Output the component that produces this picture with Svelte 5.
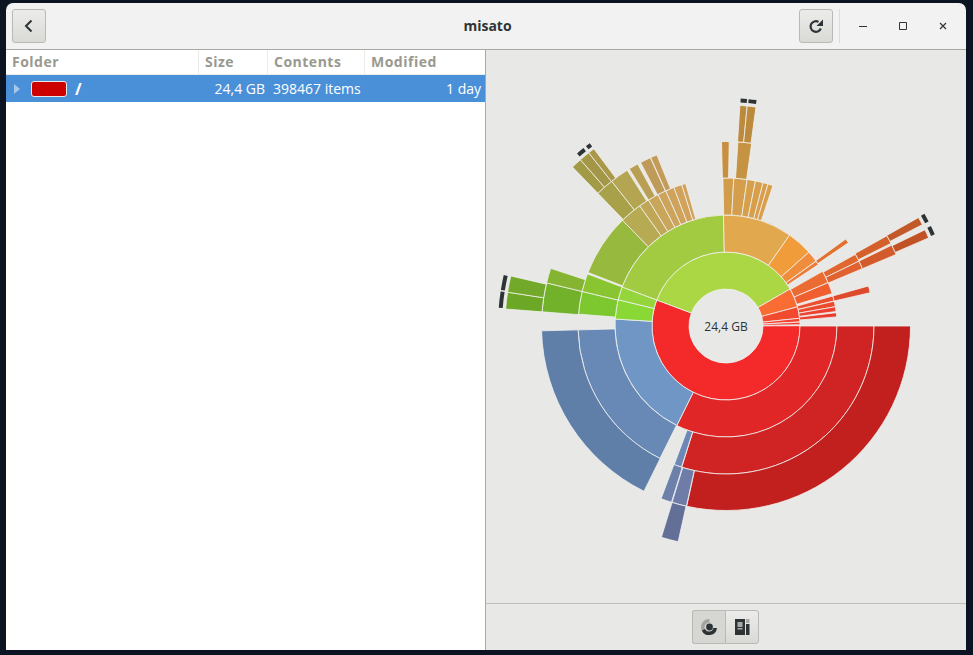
<script>
  const cx = 240, cy = 276;
  const R = [37, 74, 111, 148, 184.5, 221, 224, 228];
  // ring, start angle, end angle (degrees clockwise from east), colour
  const slices = [
    [0, -0.2, 200.6, '#f42a2a'], [0, -159.4, -30, '#aad743'], [0, -30, -15, '#f96d35'], [0, -15, -6, '#f24a2e'],
    [0, -6, -3.2, '#f3402c'], [0, -3, -1, '#f3362b'],
    [1, 0, 116.3, '#e02626'], [1, 116.3, 183.6, '#7096c6'], [1, -176.4, -166.3, '#89d835'], [1, -166.3, -159.4, '#94d53c'],
    [1, -159.4, -91.3, '#a3cb42'], [1, -91.3, -55, '#e2a84e'], [1, -55, -41.7, '#f09c3a'], [1, -41.7, -35.8, '#ef8d3c'],
    [1, -35.7, -33.6, '#ec7c36'], [1, -29.5, -23, '#ea6c33'], [1, -23, -17, '#ef5f30'], [1, -15.7, -13, '#ec4f2e'],
    [1, -12.9, -10, '#ec4a2e'], [1, -10, -7.5, '#ec4230'], [1, -6.9, -4.7, '#ea3a2c'],
    [2, 0, 107.4, '#d02323'], [2, 107.5, 110.5, '#6e88b6'], [2, 116.5, 178.5, '#6889b5'], [2, -175.4, -166.5, '#7dc72f'],
    [2, -166.5, -159.4, '#89c431'], [2, -158.8, -134.4, '#97ba3e'], [2, -134.4, -125.7, '#b6ab53'],
    [2, -125.7, -121.6, '#c0a657'], [2, -121.6, -117.4, '#c8a65a'], [2, -117.4, -114, '#cca45b'], [2, -114, -110.6, '#cfa35b'],
    [2, -110.6, -107.4, '#d1a25a'], [2, -107.4, -105.8, '#d3a25a'],
    [2, -91.2, -87, '#d19d4b'], [2, -87, -81.8, '#d49e4c'], [2, -81.8, -78.5, '#d69f4c'], [2, -78.5, -75.5, '#d79f4c'],
    [2, -75.5, -73.5, '#d89e4b'], [2, -73.5, -71.5, '#da9d4a'], [2, -36, -34.2, '#e2702f'], [2, -29, -26, '#e0682f'],
    [2, -26, -22.8, '#e26130'], [2, -15.7, -13, '#dd4a2c'],
    [3, 0, 102.3, '#c21f1f'], [3, 102.4, 107, '#6f7ca8'], [3, 107.2, 110.6, '#6c80aa'], [3, 116.4, 178.5, '#5f7fa9'],
    [3, -175.6, -166.5, '#72b22b'], [3, -166.5, -161.8, '#85b433'], [3, -134, -128.3, '#a9a14a'], [3, -128.3, -122.4, '#b4a552'],
    [3, -121.6, -118.6, '#b89f53'], [3, -117.6, -114.2, '#c09a58'], [3, -114.1, -112, '#c49c5a'],
    [3, -91.4, -89, '#c98f41'], [3, -86.3, -82, '#c59342'], [3, -29.3, -26.6, '#d4602c'], [3, -26, -22.8, '#d35a2b'],
    [4, -175.6, -171.2, '#6ca726'], [4, -171.2, -166.9, '#72a92b'], [4, -134, -131.2, '#a39a45'], [4, -131.2, -128.4, '#a39646'],
    [4, -128.4, -126.7, '#a9974a'], [4, 102.5, 107, '#626f97'], [4, -86.4, -84.5, '#bb8a3c'], [4, -84.5, -82.2, '#bb8a3c'],
    [4, -29.4, -27.3, '#c15928'], [4, -25.8, -23.5, '#c15225']
  ];
  const ticks = [[-175.4, -171.3], [-170.9, -167.1], [-130.8, -128.7], [-127.9, -126.7], [-86.3, -84.7], [-84.3, -82.3], [-29.5, -27.3], [-26, -23.7]];

  function pt(r, a) {
    const t = (a * Math.PI) / 180;
    return `${(cx + r * Math.cos(t)).toFixed(2)} ${(cy + r * Math.sin(t)).toFixed(2)}`;
  }
  function arc(r0, r1, a0, a1) {
    const big = a1 - a0 > 180 ? 1 : 0;
    return `M${pt(r0, a0)}A${r0} ${r0} 0 ${big} 1 ${pt(r0, a1)}L${pt(r1, a1)}A${r1} ${r1} 0 ${big} 0 ${pt(r1, a0)}Z`;
  }
</script>

<div class="window">
  <header class="titlebar">
    <div class="side">
      <button class="btn" aria-label="Back">
        <svg width="16" height="16" viewBox="0 0 16 16"><path d="M10.500 2.500 5 8l5.500 5.500" fill="none" stroke="#2e3436" stroke-width="2"/></svg>
      </button>
    </div>
    <div class="title">misato</div>
    <div class="side end">
      <button class="btn" aria-label="Reload">
        <svg width="16" height="16" viewBox="0 0 16 16"><path d="M12.800 10.500A5.300 5.300 0 1 1 10.500 3.900" fill="none" stroke="#2e3436" stroke-width="2.200"/><path d="M15 1.500v6.500H8.500z" fill="#2e3436"/></svg>
      </button>
      <div class="sep"></div>
      <div class="wctl" aria-label="Minimize"><svg width="10" height="10" viewBox="0 0 10 10"><path d="M1 5.500h8" stroke="#2e3436" stroke-width="1"/></svg></div>
      <div class="wctl" aria-label="Maximize"><svg width="10" height="10" viewBox="0 0 10 10"><path d="M1.500 1.500h7v7h-7z" fill="none" stroke="#2e3436" stroke-width="1"/></svg></div>
      <div class="wctl" aria-label="Close"><svg width="10" height="10" viewBox="0 0 10 10"><path d="m2 2 6 6M8 2 2 8" stroke="#2e3436" stroke-width="1.200"/></svg></div>
    </div>
  </header>

  <main class="body">
    <section class="list">
      <div class="cols head">
        <div>Folder</div><div>Size</div><div>Contents</div><div>Modified</div>
      </div>
      <div class="cols row">
        <div class="name">
          <svg class="arrow" width="8" height="10" viewBox="0 0 8 10"><path d="M1 0 7 5 1 10z" fill="#a6c6ea"/></svg>
          <span class="chip"></span>
          <b>/</b>
        </div>
        <div class="right size">24,4 GB</div>
        <div class="items">398467 items</div>
        <div class="right">1 day</div>
      </div>
    </section>

    <section class="chart">
      <div class="canvas">
        <svg width="480" height="553" viewBox="0 0 480 553">
          {#each slices as s}
            <path d={arc(R[s[0]], R[s[0] + 1], s[1], s[2])} fill={s[3]} stroke="#f1f1ef" stroke-width="0.800"/>
          {/each}
          {#each ticks as t}
            <path d={arc(R[6], R[7], t[0], t[1])} fill="#2e3436"/>
          {/each}
          <text x={cx} y={cy + 5} text-anchor="middle" class="center">24,4 GB</text>
        </svg>
      </div>
      <footer class="bottom">
        <div class="group">
          <button class="seg on" aria-label="Rings chart">
            <svg width="18" height="18" viewBox="0 0 18 18">
              <path d="M1.800 12.400A8 8 0 0 1 9.500 1V4.700A4.400 4.400 0 0 0 5 11z" fill="#a3a3a1"/>
              <path d="M1.800 12.400A8 8 0 0 0 17 10H13.300A4.400 4.400 0 0 1 5 11z" fill="#2e3436"/>
              <circle cx="9.500" cy="9" r="3.400" fill="#2e3436"/>
            </svg>
          </button>
          <button class="seg" aria-label="Treemap chart">
            <svg width="16" height="16" viewBox="0 0 16 16">
              <path d="M1 0h10v16H1z" fill="#2e3436"/>
              <path d="M3.500 3H8.500V8H3.500zM3.500 9H8.500V10.500H3.500z" fill="#a9a9a7"/>
              <path d="M12 0h3.500v4H12z" fill="#a9a9a7"/>
              <path d="M12 5h3.500v11H12z" fill="#2e3436"/>
            </svg>
          </button>
        </div>
      </footer>
    </section>
  </main>
</div>

<style>
  :global(body) {
    margin: 0;
    background: #0c1322;
  }
  .window {
    box-sizing: border-box;
    width: 960px;
    height: 647px;
    margin: 3px 0 0 6px;
    display: flex;
    flex-direction: column;
    border-radius: 7px 7px 0 0;
    overflow: hidden;
    font-family: "Open Sans", "Noto Sans", sans-serif;
    font-size: 14px;
    color: #2e3436;
  }
  .titlebar {
    box-sizing: border-box;
    height: 47px;
    flex: none;
    display: grid;
    grid-template-columns: 1fr auto 1fr;
    align-items: center;
    padding: 0 3px 1px 6px;
    background: #f2f2f2;
    border-bottom: 1px solid #a9a9a4;
  }
  .side {
    display: flex;
    align-items: center;
  }
  .side.end {
    justify-content: flex-end;
  }
  .btn {
    box-sizing: border-box;
    width: 34px;
    height: 34px;
    padding: 0;
    display: flex;
    align-items: center;
    justify-content: center;
    border: 1px solid #b9b9b5;
    border-radius: 3px;
    background: linear-gradient(#ececea, #d9d9d6);
  }
  .title {
    text-align: center;
    font-weight: 700;
    font-size: 14px;
    color: #2e3436;
  }
  .sep {
    width: 1px;
    height: 34px;
    margin-left: 6px;
    margin-right: 3px;
    background: #dcdcd9;
  }
  .wctl {
    width: 40px;
    height: 34px;
    display: flex;
    align-items: center;
    justify-content: center;
  }
  .body {
    flex: 1;
    min-height: 0;
    display: flex;
  }
  .list {
    width: 480px;
    box-sizing: border-box;
    flex: none;
    background: #fff;
    border-right: 1px solid #a9a9a4;
  }
  .cols {
    display: grid;
    grid-template-columns: 193px 69px 97px 120px;
    align-items: center;
  }
  .head {
    box-sizing: border-box;
    height: 25px;
    font-weight: 700;
    color: #99998f;
    border-bottom: 1px solid #ebebe8;
    letter-spacing: 0.5px;
  }
  .head div {
    box-sizing: border-box;
    height: 24px;
    line-height: 24px;
    padding-left: 6px;
    border-right: 1px solid #ebebe8;
  }
  .head div:last-child {
    border-right: 0;
  }
  .row {
    height: 27px;
    background: #4a90d9;
    color: #fff;
  }
  .name {
    display: flex;
    align-items: center;
    padding-left: 7px;
  }
  .arrow {
    margin-right: 10px;
  }
  .chip {
    box-sizing: border-box;
    width: 36px;
    height: 16px;
    background: #cc0000;
    border: 1px solid #e8e8e8;
    border-radius: 3px;
    margin-right: 8px;
  }
  .name b {
    font-size: 16px;
  }
  .right {
    text-align: right;
    padding-right: 4px;
  }
  .size {
    padding-right: 3px;
  }
  .items {
    padding-left: 5px;
  }
  .chart {
    flex: 1;
    min-width: 0;
    display: flex;
    flex-direction: column;
    background: #e8e8e6;
  }
  .canvas {
    flex: 1;
    min-height: 0;
  }
  .canvas svg {
    display: block;
  }
  .center {
    font-family: "Open Sans", "Noto Sans", sans-serif;
    font-size: 12px;
    fill: #2e3436;
  }
  .bottom {
    box-sizing: border-box;
    height: 47px;
    flex: none;
    display: flex;
    justify-content: center;
    padding-top: 6px;
    border-top: 1px solid #bdbdb9;
  }
  .group {
    display: flex;
    height: 34px;
    margin-left: -2px;
  }
  .seg {
    box-sizing: border-box;
    width: 34px;
    height: 34px;
    padding: 0;
    display: flex;
    align-items: center;
    justify-content: center;
    border: 1px solid #b9b9b5;
    border-radius: 0 3px 3px 0;
    background: linear-gradient(#ececea, #d9d9d6);
  }
  .seg.on {
    width: 33px;
    border-right: 0;
    border-radius: 3px 0 0 3px;
    background: #d6d6d3;
  }
</style>
